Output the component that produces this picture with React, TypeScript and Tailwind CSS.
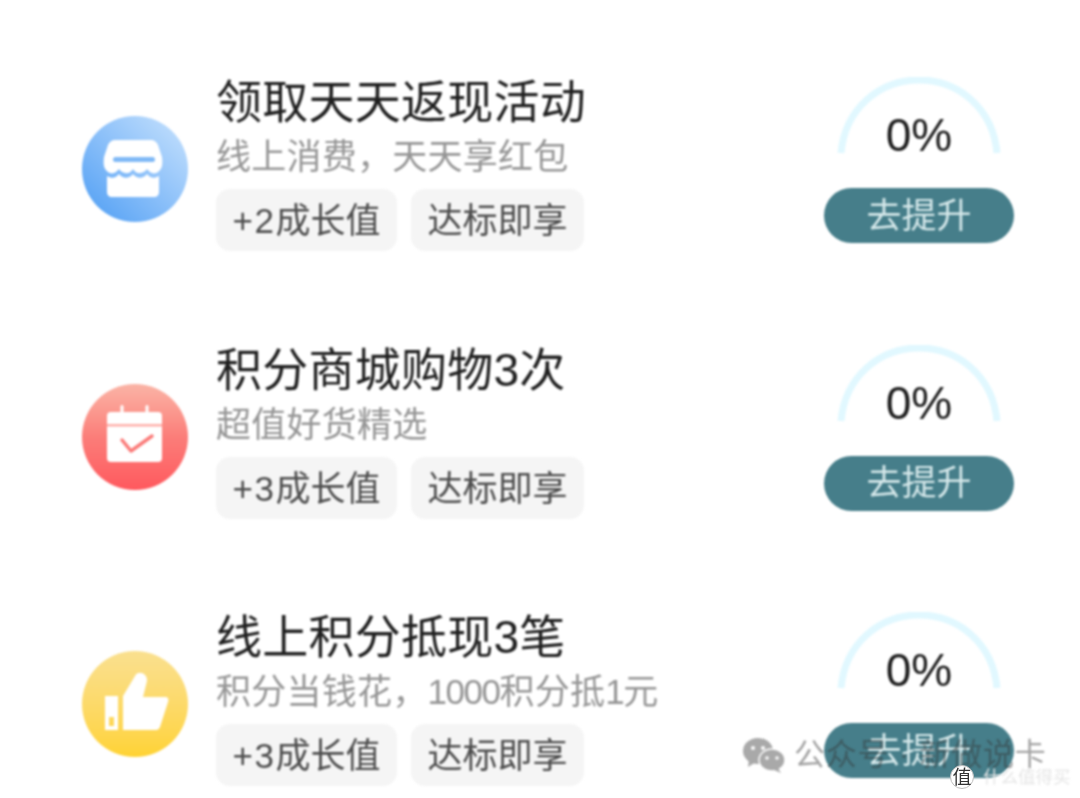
const font = { fontFamily: '"Liberation Sans", "Noto Sans CJK SC", sans-serif' };

function StoreIcon() {
  return (
    <svg viewBox="0 0 106 106" className="w-full h-full">
      <path d="M33 24H69C72 24 75 26 76 29L80 41C81 49 80 53 76 56C72 59 68 57 65 53C62 58 54 59 51 53C48 59 40 58 37 53C34 57 30 59 26 56C22 53 21 49 22 41L26 29C27 26 30 24 33 24Z" fill="#fff" />
      <path d="M25 60C30 63 34 62 37 58C41 63 47 63 51 58C55 63 61 63 65 58C68 62 72 63 77 60V76C77 79 75 81 72 81H30C27 81 25 79 25 76Z" fill="#fff" />
      <rect x="31" y="41" width="42" height="5" rx="2.5" fill="#80b9f6" />
    </svg>
  );
}

function CalendarIcon() {
  return (
    <svg viewBox="0 0 106 106" className="w-full h-full">
      <rect x="25" y="28" width="55" height="50" rx="4" fill="#fff" />
      <rect x="38.5" y="21" width="3" height="12" rx="1.5" fill="#fff" />
      <rect x="63.5" y="21" width="3" height="12" rx="1.5" fill="#fff" />
      <rect x="25" y="40" width="55" height="2.5" fill="#ffb0ab" />
      <path d="M40 56L49 67L70 52" fill="none" stroke="#fb7b79" strokeWidth="3.5" strokeLinecap="round" strokeLinejoin="round" />
    </svg>
  );
}

function ThumbIcon() {
  return (
    <svg viewBox="0 0 106 106" className="w-full h-full">
      <path fillRule="evenodd" d="M23 45H36V79H23ZM27 66V75H32V66Z" fill="#fff" />
      <path d="M41 79V45L53 25C55 21 60 21 63 24C66 27 65 31 64 34L61 46H83C86 46 87 48 86 51L78 76C77 78 76 79 74 79Z" fill="#fff" />
    </svg>
  );
}

function Digits({ children }: { children: React.ReactNode }) {
  return <span className="tracking-[-1.5px]">{children}</span>;
}

function TaskRow({ icon, gradient, title, subtitle, growth }: { icon: React.ReactNode; gradient: string; title: React.ReactNode; subtitle: React.ReactNode; growth: string }) {
  return (
    <div className="flex h-[176px] shrink-0">
      <div className={`mt-[41px] h-[106px] w-[106px] shrink-0 rounded-full ${gradient}`}>{icon}</div>
      <div className="ml-[28px] flex min-w-0 flex-1 flex-col">
        <div className="h-[54px] whitespace-nowrap text-[46px] leading-[54px] tracking-[0.25px] text-[#1f1f1f]">{title}</div>
        <div className="mt-[7px] h-[41px] whitespace-nowrap text-[35px] leading-[41px] tracking-[0.25px] text-[#969696]">{subtitle}</div>
        <div className="mt-[12px] flex gap-[14px]">
          <div className="flex h-[62px] w-[181px] items-center justify-center rounded-[14px] bg-[#f5f5f5] pt-[3px] text-[35px] text-[#4d4d4d]">
            <span className="tracking-[1.5px]">{growth.slice(0, 2)}</span>
            {growth.slice(2)}
          </div>
          <div className="flex h-[62px] w-[173px] items-center justify-center rounded-[14px] bg-[#f5f5f5] pt-[3px] text-[35px] text-[#4d4d4d]">达标即享</div>
        </div>
      </div>
      <div className="flex w-[190px] shrink-0 flex-col items-center">
        <div className="relative mt-[2px] h-[79px] w-[166px]">
          <svg viewBox="0 0 166 79" className="absolute inset-0 h-full w-full">
            <path d="M5 76C9 32 43 3 83 3C123 3 157 32 161 76" fill="none" stroke="#e1f8ff" strokeWidth="7" />
          </svg>
          <div className="absolute inset-x-0 top-[31px] text-center text-[46px] leading-[54px] text-[#1c1c1c]">0%</div>
        </div>
        <div className="mt-[32px] flex h-[55px] w-full items-center justify-center rounded-full bg-[#467e8a] pt-[1px] text-[35px] text-[#d5e8ea]">去提升</div>
      </div>
    </div>
  );
}

export default function App() {
  return (
    <div className="relative h-[798px] w-[1080px] overflow-hidden bg-white" style={font}>
      <div className="flex flex-col gap-[91.5px] pl-[82px] pr-[66px] pt-[75px] blur-[1px]">
        <TaskRow icon={<StoreIcon />} gradient="bg-gradient-to-tr from-[#4a9cf3] to-[#c9e3fd]" title="领取天天返现活动" subtitle="线上消费，天天享红包" growth="+2成长值" />
        <TaskRow icon={<CalendarIcon />} gradient="bg-gradient-to-b from-[#fab4a6] via-[#fb7d79] to-[#ff585e]" title="积分商城购物3次" subtitle="超值好货精选" growth="+3成长值" />
        <TaskRow icon={<ThumbIcon />} gradient="bg-gradient-to-b from-[#fae08f] to-[#ffd332]" title="线上积分抵现3笔" subtitle={<>积分当钱花，<Digits>1000</Digits>积分抵<Digits>1</Digits>元</>} growth="+3成长值" />
      </div>
      <div className="absolute left-[743px] top-[736px] flex items-center blur-[1px]">
        <svg viewBox="0 0 44 36" className="h-[36px] w-[44px]">
          <ellipse cx="15" cy="14" rx="15" ry="13" fill="#a9a9a9" />
          <path d="M6 22L5 30L13 25Z" fill="#a9a9a9" />
          <ellipse cx="29" cy="23" rx="13" ry="11" fill="#a9a9a9" stroke="#fff" strokeWidth="1.5" />
          <path d="M35 31L38 36L31 33Z" fill="#a9a9a9" />
          <circle cx="10" cy="11" r="2" fill="#fff" />
          <circle cx="20" cy="11" r="2" fill="#fff" />
          <circle cx="24" cy="21" r="1.7" fill="#fff" />
          <circle cx="34" cy="21" r="1.7" fill="#fff" />
        </svg>
        <div className="ml-[7px] whitespace-nowrap text-[31px] leading-[38px] tracking-[0.8px] text-[#333333]/45">公众号 · 新做说卡</div>
      </div>
      <div className="absolute left-[950px] top-[765px] flex items-center">
        <div className="flex h-[24px] w-[24px] items-center justify-center rounded-full border border-[#bdbdbd] bg-white text-[19px] leading-none text-[#333] blur-[0.5px]">值</div>
        <div className="ml-[9px] whitespace-nowrap text-[17.5px] leading-[24px] text-[#e6e6e6] blur-[1px]">什么值得买</div>
      </div>
    </div>
  );
}
